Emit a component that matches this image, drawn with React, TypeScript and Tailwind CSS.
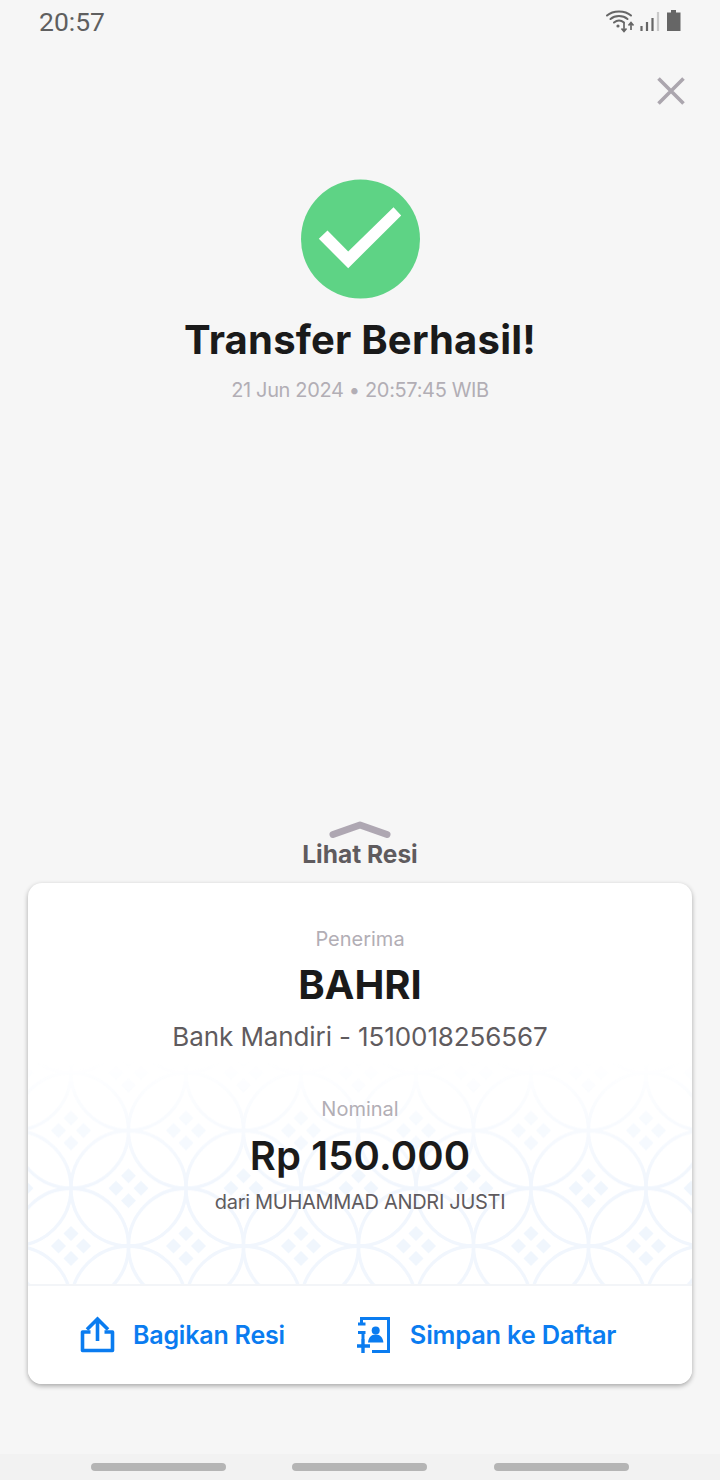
import React from "react";

const font = { fontFamily: "Inter, 'Noto Sans', sans-serif" };

function Kawung() {
  return (
    <svg className="absolute left-0 top-[177px] w-full h-[225px]" viewBox="0 0 664 225" aria-hidden="true">
      <defs>
        <pattern id="kw" x="43" y="-45" width="115" height="115.500" patternUnits="userSpaceOnUse">
          {[[0,0],[115,0],[0,115.500],[115,115.500],[57.500,57.750]].map(([x,y],i)=>(
            <g key={i}>
              <circle cx={x} cy={y} r="57.500" fill="none" stroke="#f1f6fd" strokeWidth="3.400" />
              <g fill="#f0f6fd">
                <path d={`M${x} ${y-20}l7.500 7.500-7.500 7.500-7.500-7.500z`} />
                <path d={`M${x} ${y+5}l7.500 7.500-7.500 7.500-7.500-7.500z`} />
                <path d={`M${x-20} ${y}l7.500-7.500 7.500 7.500-7.500 7.500z`} />
                <path d={`M${x+5} ${y}l7.500-7.500 7.500 7.500-7.500 7.500z`} />
              </g>
            </g>
          ))}
        </pattern>
        <linearGradient id="fade" x1="0" y1="0" x2="0" y2="1">
          <stop offset="0" stopColor="white" stopOpacity="0" />
          <stop offset="0.55" stopColor="white" stopOpacity="1" />
        </linearGradient>
        <mask id="fm"><rect width="664" height="225" fill="url(#fade)" /></mask>
      </defs>
      <rect width="664" height="225" fill="url(#kw)" mask="url(#fm)" />
    </svg>
  );
}

export default function App() {
  return (
    <div className="relative flex flex-col w-[720px] h-[1480px] bg-[#f6f6f6] overflow-hidden" style={font}>
      {/* status bar */}
      <div className="flex justify-between items-center h-[44px] pl-[39px] pr-[37px] shrink-0">
        <span className="text-[26.500px] leading-[44px] text-[#5f5f5f]" style={{ fontFamily: "Roboto, sans-serif" }}>20:57</span>
        <svg width="78" height="26" viewBox="0 0 78 26" className="-mt-[4px]" fill="none">
          <g stroke="#666" strokeWidth="2" strokeLinecap="round">
            <path d="M2 8.500C8 3 20 3 26 8.500" />
            <path d="M5.500 12C10 8 18 8 22.500 12" />
            <path d="M9 15.500C12 13 16 13 19 15.500" />
          </g>
          <circle cx="13" cy="19" r="1.600" fill="#666" />
          <path d="M19 16v8M16.500 21.500l2.500 3 2.500-3M26 23v-7M23.500 18.500l2.500-3 2.500 3" stroke="#666" strokeWidth="1.700" />
          <path d="M36.500 24v-5M42 24v-9M47.500 24v-13" stroke="#666" strokeWidth="2.200" />
          <path d="M53 24V5" stroke="#c9c9c9" strokeWidth="2.200" />
          <path d="M62 5.500h4V3h5v2.500h4.500V24H62z" fill="#666" />
        </svg>
      </div>

      {/* close */}
      <div className="flex justify-end pr-[35px] pt-[33px] shrink-0">
        <svg width="28" height="28" viewBox="0 0 28 28" stroke="#aba6ae" strokeWidth="3.600" fill="none">
          <path d="M1.500 1.500l25 25M26.500 1.500l-25 25" />
        </svg>
      </div>

      {/* success */}
      <div className="flex flex-col items-center pt-[74px] shrink-0">
        <svg width="120" height="120" viewBox="0 0 120 120">
          <circle cx="60.500" cy="60" r="59.500" fill="#5ed385" />
          <path d="M18.800 59.800L27.500 51.500 48.200 72.500 93.500 28.200 101.200 36.500 48.200 89.200z" fill="#fff" />
        </svg>
        <h1 className="mt-[17px] text-[40px] leading-[48px] font-bold text-[#1a1a1a] tracking-[0.2px]">Transfer Berhasil!</h1>
        <p className="mt-[13px] text-[20px] leading-[26px] text-[#b2aeb5] tracking-[-0.35px]">21 Jun 2024 • 20:57:45 WIB</p>
      </div>

      {/* chevron + label */}
      <div className="mt-auto flex flex-col items-center shrink-0">
        <svg width="64" height="18" viewBox="0 0 64 18" fill="none">
          <path d="M5 13.500L32 4l27 9.500" stroke="#aea7b2" strokeWidth="7" strokeLinecap="round" strokeLinejoin="round" />
        </svg>
        <span className="text-[24.500px] leading-[30px] font-bold text-[#5f5b5e]">Lihat Resi</span>
      </div>

      {/* card */}
      <div className="relative mx-[28px] mt-[14px] h-[501px] shrink-0 rounded-[14px] bg-white shadow-[0_2px_5px_rgba(0,0,0,0.32)] overflow-hidden flex flex-col">
        <Kawung />
        <div className="relative h-[401px] flex flex-col items-center pt-[42px] shrink-0">
          <span className="text-[20px] leading-[28px] text-[#b2aeb5]">Penerima</span>
          <span className="mt-[7px] text-[40px] leading-[50px] font-bold text-[#1a1a1a]">BAHRI</span>
          <span className="mt-[9px] text-[26px] leading-[36px] text-[#5f5b5e] tracking-[-0.1px]">Bank Mandiri - 1510018256567</span>
          <span className="mt-[40px] text-[20px] leading-[28px] text-[#b2aeb5]">Nominal</span>
          <span className="mt-[8px] text-[40px] leading-[50px] font-semibold text-[#1a1a1a] tracking-[0.1px]">Rp 150.000</span>
          <span className="mt-[7px] text-[20px] leading-[28px] text-[#5f5b5e] tracking-[-0.3px]">dari MUHAMMAD ANDRI JUSTI</span>
        </div>
        <div className="relative h-[100px] bg-white border-t-2 border-[#f3f5f8] flex items-center pl-[52px] shrink-0">
          <svg width="36" height="38" viewBox="0 0 36 38" fill="none" stroke="#0a7cf0" strokeWidth="3.600" className="-mt-[1px]">
            <path d="M10.500 16H2.500v18.500h30V16h-8" strokeLinejoin="round" />
            <path d="M17.500 25V4M7 13.500L17.500 3 28 13.500" />
          </svg>
          <span className="ml-[17px] text-[25px] leading-[30px] font-semibold text-[#0a7cf0] tracking-[-0.2px]">Bagikan Resi</span>
          <svg width="34" height="38" viewBox="0 0 34 38" fill="none" className="ml-[72px]">
            <path d="M4.500 8V2.500H31.500V35.500H15" stroke="#0a7cf0" strokeWidth="3" />
            <path d="M1 8h7.500M1 16.500h7.500M6 16v7" stroke="#0a7cf0" strokeWidth="3" />
            <path d="M6 23v14M-1 30h14" stroke="#0a7cf0" strokeWidth="3.400" />
            <circle cx="18.700" cy="14.500" r="4" fill="#0a7cf0" />
            <path d="M11 26.500c.5-5 3-8 7.700-8s7.200 3 7.700 8z" fill="#0a7cf0" />
          </svg>
          <span className="ml-[19px] text-[25.400px] leading-[30px] font-semibold text-[#0a7cf0] tracking-[-0.2px]">Simpan ke Daftar</span>
        </div>
      </div>

      {/* nav */}
      <div className="mt-[70px] h-[26px] bg-[#f2f2f2] flex items-start pt-[9px] pl-[91px] gap-[66px] shrink-0">
        <div className="w-[135px] h-[8px] rounded-full bg-[#b5b5b5]" />
        <div className="w-[135px] h-[8px] rounded-full bg-[#b5b5b5]" />
        <div className="w-[135px] h-[8px] ml-[1px] rounded-full bg-[#b5b5b5]" />
      </div>
    </div>
  );
}
